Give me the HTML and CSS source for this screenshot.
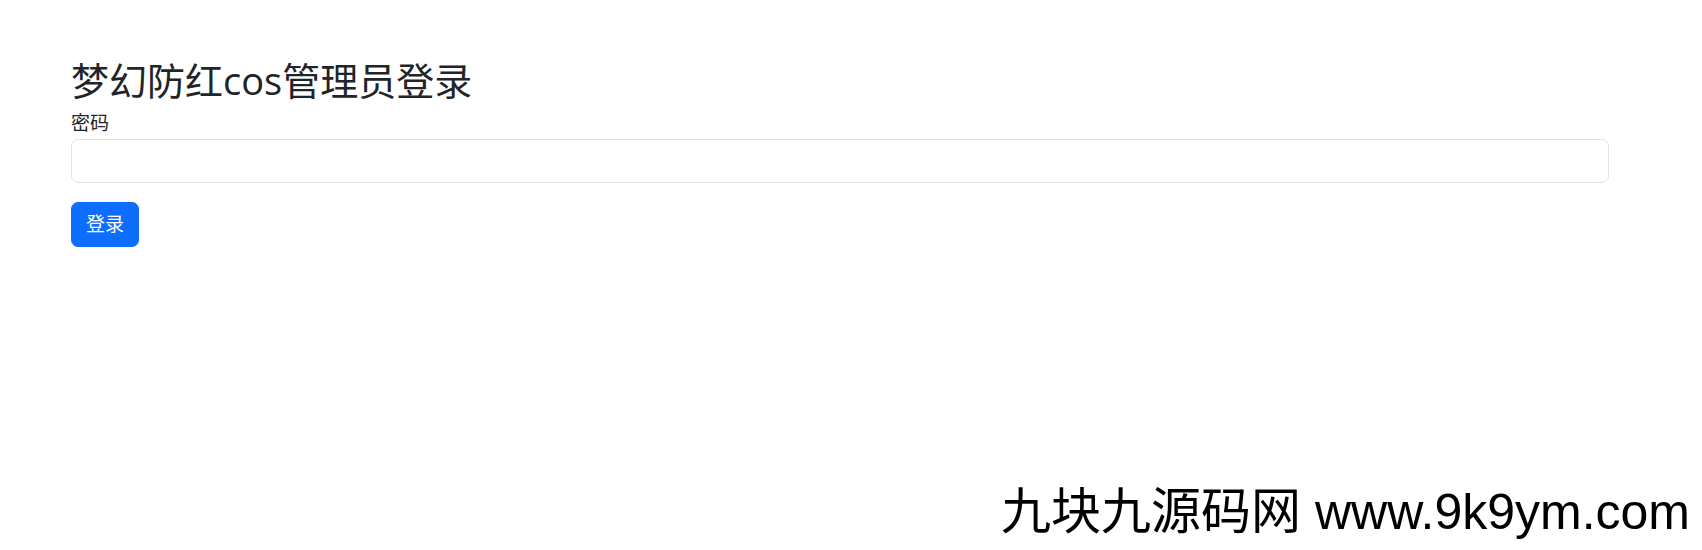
FILE: index.html
```html
<!DOCTYPE html>
<html lang="zh-CN">
<head>
<meta charset="utf-8">
<title>梦幻防红cos管理员登录</title>
<link rel="stylesheet" href="styles.css">
</head>
<body>
<div class="container">
  <h2 class="title">梦幻防红cos管理员登录</h2>
  <form class="login-form">
    <label class="form-label" for="password">密码</label>
    <input class="form-control" type="password" id="password" name="password">
    <button class="btn-primary" type="submit">登录</button>
  </form>
</div>
<div class="watermark">九块九源码网 www.9k9ym.com</div>
</body>
</html>
```

FILE: styles.css
```css
html, body {
  margin: 0;
  padding: 0;
  background: #ffffff;
}
body {
  width: 1702px;
  height: 550px;
  position: relative;
  overflow: hidden;
  font-family: "Open Sans", "Noto Sans CJK SC", sans-serif;
  color: #212529;
}
.container {
  padding: 57px 93px 0 71px;
}
.title {
  margin: 0 0 6px 0;
  font-size: 38px;
  line-height: 46px;
  font-weight: 400;
  color: #212529;
}
.login-form {
  display: flex;
  flex-direction: column;
  align-items: flex-start;
}
.form-label {
  font-size: 19px;
  line-height: 29px;
  height: 29px;
}
.form-control {
  box-sizing: border-box;
  width: 100%;
  height: 44px;
  margin: 1px 0 0 0;
  border: 1px solid #dee2e6;
  border-radius: 7px;
  background: #fff;
  outline: none;
  padding: 0 14px;
  font-size: 19px;
}
.btn-primary {
  box-sizing: border-box;
  margin-top: 19px;
  height: 45px;
  padding: 0 14px;
  border: 1px solid #0d6efd;
  border-radius: 7px;
  background: #0d6efd;
  color: #fff;
  font-family: "Open Sans", "Noto Sans CJK SC", sans-serif;
  font-size: 19px;
  line-height: 1;
  cursor: pointer;
}
.watermark {
  position: absolute;
  top: 484px;
  right: 12px;
  font-family: "Liberation Sans", "Noto Sans CJK SC", sans-serif;
  font-size: 50px;
  line-height: 56px;
  color: #000;
  white-space: nowrap;
}
```
